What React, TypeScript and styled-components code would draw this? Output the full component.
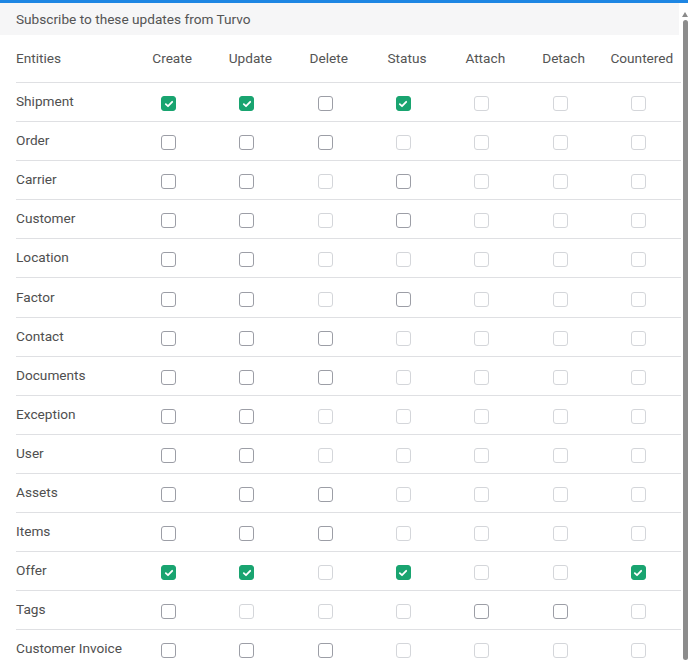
import React from 'react'
import styled, { createGlobalStyle } from 'styled-components'

/* --------------------- Style --------------------- */
const GlobalStyle = createGlobalStyle`
  html, body {
    margin: 0;
    padding: 0;
    height: 100%;
    overflow: hidden;
    background: #fff;
  }
  body {
    font-family: Roboto, "Liberation Sans", Arial, sans-serif;
    font-size: 13.65px;
    color: #4f4f4f;
  }
`

const Page = styled.div`
  display: flex;
  flex-direction: column;
  width: 688px;
  height: 663px;
  overflow: hidden;
`

const TopBar = styled.div`
  height: 3px;
  flex: none;
  background: #1e86e3;
`

const Body = styled.div`
  display: flex;
  flex: 1;
  min-height: 0;
`

const Main = styled.div`
  flex: 1;
  min-width: 0;
  overflow: hidden;
`

const Banner = styled.div`
  height: 32px;
  display: flex;
  align-items: center;
  padding-left: 16px;
  margin-right: 2px;
  background: #f6f6f7;
  color: #545454;
`

const Table = styled.div`
  display: grid;
  grid-template-columns: 117px repeat(7, 1fr);
  margin-left: 16px;
`

const HeadCell = styled.div<{ $first?: boolean }>`
  height: 48px;
  box-sizing: border-box;
  padding-bottom: 1px;
  display: flex;
  align-items: center;
  justify-content: ${(p) => (p.$first ? 'flex-start' : 'center')};
  border-bottom: 1px solid #dfe0e3;
  color: #545454;
  white-space: nowrap;
`

const Cell = styled.div<{ $first?: boolean }>`
  height: 39.1px;
  box-sizing: border-box;
  display: flex;
  align-items: center;
  justify-content: ${(p) => (p.$first ? 'flex-start' : 'center')};
  border-bottom: 1px solid #dfe0e3;
  color: #4f4f4f;
  white-space: nowrap;
  padding-bottom: ${(p) => (p.$first ? '2px' : '0')};
`

const Box = styled.span<{ $state: 'c' | 'e' | 'd' }>`
  width: 15px;
  height: 15px;
  box-sizing: border-box;
  margin: 3px 7px 0 0;
  border-radius: 3px;
  display: inline-flex;
  align-items: center;
  justify-content: center;
  border: 1.5px solid
    ${(p) => (p.$state === 'c' ? '#19a470' : p.$state === 'e' ? '#9c9ea6' : '#d4d6da')};
  background: ${(p) => (p.$state === 'c' ? '#19a470' : '#fff')};
`

const Rail = styled.div`
  width: 7px;
  flex: none;
  display: flex;
  flex-direction: column;
  align-items: flex-end;
  padding-top: 9px;
`

const Arrow = styled.div`
  width: 0;
  height: 0;
  border-left: 3px solid transparent;
  border-right: 3px solid transparent;
  border-bottom: 5px solid #8a8a8a;
`

const Thumb = styled.div`
  width: 5px;
  height: 640px;
  margin-top: 3px;
  border-radius: 3px;
  background: #8c8c8c;
`
/* ------------------------------------------------- */

const columns = ['Create', 'Update', 'Delete', 'Status', 'Attach', 'Detach', 'Countered']

type State = 'c' | 'e' | 'd'

const rows: [string, string][] = [
  ['Shipment', 'ccecddd'],
  ['Order', 'eeedddd'],
  ['Carrier', 'eededdd'],
  ['Customer', 'eededdd'],
  ['Location', 'eeddddd'],
  ['Factor', 'eededdd'],
  ['Contact', 'eeedddd'],
  ['Documents', 'eeedddd'],
  ['Exception', 'eeddddd'],
  ['User', 'eeddddd'],
  ['Assets', 'eeedddd'],
  ['Items', 'eeedddd'],
  ['Offer', 'ccdcddc'],
  ['Tags', 'edddeed'],
  ['Customer Invoice', 'eeedddd'],
]

const Check: React.FC<{ state: State }> = ({ state }) => (
  <Box $state={state}>
    {state === 'c' && (
      <svg width="10" height="10" viewBox="0 0 10 10">
        <path
          d="M1.8 5.2 L4 7.2 L8.2 2.8"
          fill="none"
          stroke="#fff"
          strokeWidth={1.8}
          strokeLinecap="round"
          strokeLinejoin="round"
        />
      </svg>
    )}
  </Box>
)

const App: React.FC = () => {
  return (
    <>
      <GlobalStyle />
      <Page>
        <TopBar />
        <Body>
          <Main>
            <Banner>Subscribe to these updates from Turvo</Banner>
            <Table>
              <HeadCell $first>Entities</HeadCell>
              {columns.map((c) => (
                <HeadCell key={c}>{c}</HeadCell>
              ))}
              {rows.map(([name, states]) => (
                <React.Fragment key={name}>
                  <Cell $first>{name}</Cell>
                  {states.split('').map((s, i) => (
                    <Cell key={i}>
                      <Check state={s as State} />
                    </Cell>
                  ))}
                </React.Fragment>
              ))}
            </Table>
          </Main>
          <Rail>
            <Arrow />
            <Thumb />
          </Rail>
        </Body>
      </Page>
    </>
  )
}

export default App
